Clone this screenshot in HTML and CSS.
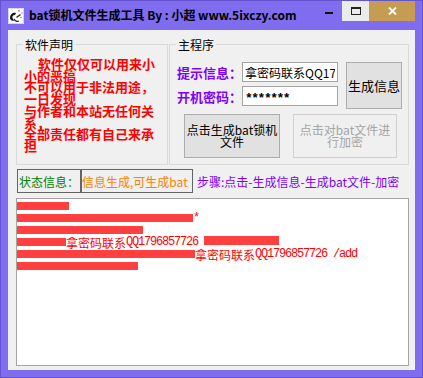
FILE: index.html
```html
<!DOCTYPE html>
<html lang="zh-CN">
<head>
    <meta charset="UTF-8">
    <title>bat锁机文件生成工具</title>
    <link rel="stylesheet" href="styles.css">
</head>
<body>
    <div class="window">
        <div class="titlebar">
            <svg class="app-icon" viewBox="0 0 16 16">
                <rect x="0.5" y="0.5" width="15" height="15" fill="#fff" stroke="#d8d8d8"/>
                <path d="M2 10 C2 6 5 4 8 5 L7 7 C5 7 4 8 4.5 10 L6 13 C4 13 2 12 2 10 Z" fill="#111"/>
                <path d="M8 9 L12 6 L13 7 L9 10 Z" fill="#333"/>
                <path d="M6 11 C7 13 9 14 11 13" stroke="#222" stroke-width="1.2" fill="none"/>
                <rect x="10" y="2" width="2" height="2" fill="#f29ab8"/>
                <rect x="13" y="4" width="2" height="2" fill="#f6bcd0"/>
                <rect x="12" y="9" width="2" height="1" fill="#e88aa8"/>
            </svg>
            <span class="title">bat锁机文件生成工具 By : 小超 www.5ixczy.com</span>
            <div class="caption">
                <span class="cap-btn min"><i></i></span>
                <span class="cap-btn max"><i></i></span>
                <span class="cap-btn close">
                    <svg width="9" height="8" viewBox="0 0 9 8"><path d="M1 0.5L8 7.5M8 0.5L1 7.5" stroke="#fff" stroke-width="1.8"/></svg>
                </span>
            </div>
        </div>

        <div class="client">
            <div class="groups">
                <div class="group notice">
                    <div class="group-title">软件声明</div>
                    <div class="notice-text">
                        <div class="indent">软件仅仅可以用来小</div>
                        <div>小的恶搞</div>
                        <div>不可以用于非法用途，</div>
                        <div>一日发现</div>
                        <div>与作者和本站无任何关</div>
                        <div>系，</div>
                        <div>全部责任都有自己来承</div>
                        <div>担</div>
                    </div>
                </div>

                <div class="group main">
                    <div class="group-title">主程序</div>
                    <div class="main-top">
                        <div class="fields">
                            <div class="field">
                                <label for="tip">提示信息：</label>
                                <input type="text" id="tip" value="拿密码联系QQ1796857726">
                            </div>
                            <div class="field">
                                <label for="pwd">开机密码：</label>
                                <input type="text" id="pwd" class="pwd" value="*******">
                            </div>
                        </div>
                        <button class="btn gen-info">生成信息</button>
                    </div>
                    <div class="main-bottom">
                        <button class="btn gen-bat">点击生成bat锁机<br>文件</button>
                        <button class="btn encrypt" disabled>点击对bat文件进<br>行加密</button>
                    </div>
                </div>
            </div>

            <div class="status-row">
                <div class="stat-box stat-label">状态信息：</div>
                <div class="stat-box stat-value">信息生成,可生成bat</div>
                <div class="steps">步骤:点击-生成信息-生成bat文件-加密</div>
            </div>

            <div class="output">
                <div class="line"><span class="bar r1"></span></div>
                <div class="line"><span class="bar r2"></span>*</div>
                <div class="line"><span class="bar r3"></span></div>
                <div class="line"><span class="bar r4"></span><span class="cjk">拿密码联系</span>QQ1796857726 <span class="bar r5 high"></span></div>
                <div class="line"><span class="bar r6"></span> <span class="cjk">拿密码联系</span>QQ1796857726 /add</div>
                <div class="line"><span class="bar r7"></span></div>
            </div>
        </div>
    </div>
</body>
</html>
```

FILE: styles.css
```css
body {
    margin: 0;
    font-family: "Noto Sans CJK SC", sans-serif;
    font-size: 12px;
}

.window {
    width: 423px;
    height: 378px;
    box-sizing: border-box;
    background: #7f6cef;
    border: 1px solid #6552cf;
    display: flex;
    flex-direction: column;
}

/* title bar */
.titlebar {
    height: 29px;
    display: flex;
    align-items: flex-start;
}

.app-icon {
    width: 16px;
    height: 16px;
    margin: 7px 0 0 7px;
}

.title {
    margin-left: 5px;
    font-weight: bold;
    font-size: 12px;
    line-height: 28px;
    color: #000;
}

.caption {
    margin-left: auto;
    margin-right: 7px;
    display: flex;
}

.cap-btn {
    width: 27px;
    height: 20px;
    display: flex;
    align-items: center;
    justify-content: center;
}

.cap-btn.min i {
    width: 8px;
    height: 2px;
    margin-top: 4px;
    background: #111;
}

.cap-btn.max {
    background: #ebebeb;
}

.cap-btn.max i {
    width: 10px;
    height: 8px;
    box-sizing: border-box;
    border: 1px solid #222;
    border-top-width: 2px;
}

.cap-btn.close {
    width: 46px;
    background: #c69c52;
}

/* client area */
.client {
    margin: 0 7px;
    height: 340px;
    box-sizing: border-box;
    padding: 0 6px 0 8px;
    background: #f0f0f0;
    display: flex;
    flex-direction: column;
}

.groups {
    display: flex;
    gap: 1px;
    margin-top: 14px;
}

.group {
    height: 121px;
    box-sizing: border-box;
    border: 1px solid #d9d9d9;
}

.notice {
    width: 152px;
}

.main {
    width: 240px;
}

.group-title {
    display: table;
    margin: -8px 0 0 6px;
    padding: 0 2px;
    line-height: 16px;
    background: #f0f0f0;
    color: #000;
}

.notice-text {
    margin: 5px 0 0 7px;
    color: #ff0000;
    font-weight: bold;
    font-size: 13px;
    line-height: 11.7px;
    white-space: nowrap;
}

.notice-text .indent {
    padding-left: 14px;
}

.main-top {
    display: flex;
    align-items: flex-start;
    margin: 9px 0 0 7px;
}

.fields {
    display: flex;
    flex-direction: column;
    gap: 4px;
}

.field {
    display: flex;
    align-items: center;
    height: 20px;
}

.field label {
    width: 65px;
    color: #8000ff;
    font-weight: bold;
    font-size: 13px;
}

.field input {
    width: 96px;
    height: 20px;
    box-sizing: border-box;
    margin: 0;
    padding: 0 2px;
    border: 1px solid #a3a3a3;
    font-family: "Noto Sans CJK SC", sans-serif;
    font-size: 12px;
    color: #000;
    background: #fff;
}

.field input.pwd {
    font-family: "Liberation Mono", monospace;
    font-weight: bold;
    font-size: 13px;
    letter-spacing: -1.5px;
    padding-top: 4px;
}

.btn {
    margin: 0;
    padding: 0;
    background: #e1e1e1;
    border: 1px solid #adadad;
    font-family: "Noto Sans CJK SC", sans-serif;
    font-size: 12px;
    line-height: 12px;
    color: #000;
}

.btn:disabled {
    background: #f0f0f0;
    border-color: #cfcfcf;
    color: #a5a5a5;
}

.gen-info {
    width: 56px;
    height: 47px;
    margin-left: 8px;
    font-size: 13px;
}

.main-bottom {
    display: flex;
    gap: 13px;
    margin: 5px 0 0 14px;
}

.gen-bat {
    width: 96px;
    height: 44px;
}

.encrypt {
    width: 104px;
    height: 44px;
}

/* status line */
.status-row {
    display: flex;
    align-items: center;
    height: 24px;
    margin-top: 4px;
}

.stat-box {
    height: 24px;
    box-sizing: border-box;
    border: 1px solid #646464;
    display: flex;
    align-items: center;
    white-space: nowrap;
}

.stat-label {
    width: 64px;
    margin-left: 1px;
    padding-left: 1px;
    color: #008000;
}

.stat-value {
    width: 112px;
    color: #ff8000;
}

.steps {
    margin-left: 4px;
    color: #8000ff;
    white-space: nowrap;
}

/* output box */
.output {
    height: 168px;
    margin-top: 5px;
    box-sizing: border-box;
    padding-top: 1px;
    border: 1px solid #a5a5a5;
    background: #fff;
}

.output .line {
    height: 12px;
    display: flex;
    align-items: center;
    white-space: pre;
    color: #ff0000;
    font-family: "Liberation Mono", monospace;
    font-size: 12px;
    letter-spacing: -1.2px;
}

.output .cjk {
    font-family: "Noto Sans CJK SC", sans-serif;
    letter-spacing: 0;
}

.bar {
    height: 8px;
    background: #ff4040;
}

.bar.high {
    margin-top: -4px;
    height: 9px;
}

.r1 { width: 52px; }
.r2 { width: 176px; }
.r3 { width: 126px; }
.r4 { width: 49px; }
.r5 { width: 75px; }
.r6 { width: 178px; }
.r7 { width: 121px; }
```
